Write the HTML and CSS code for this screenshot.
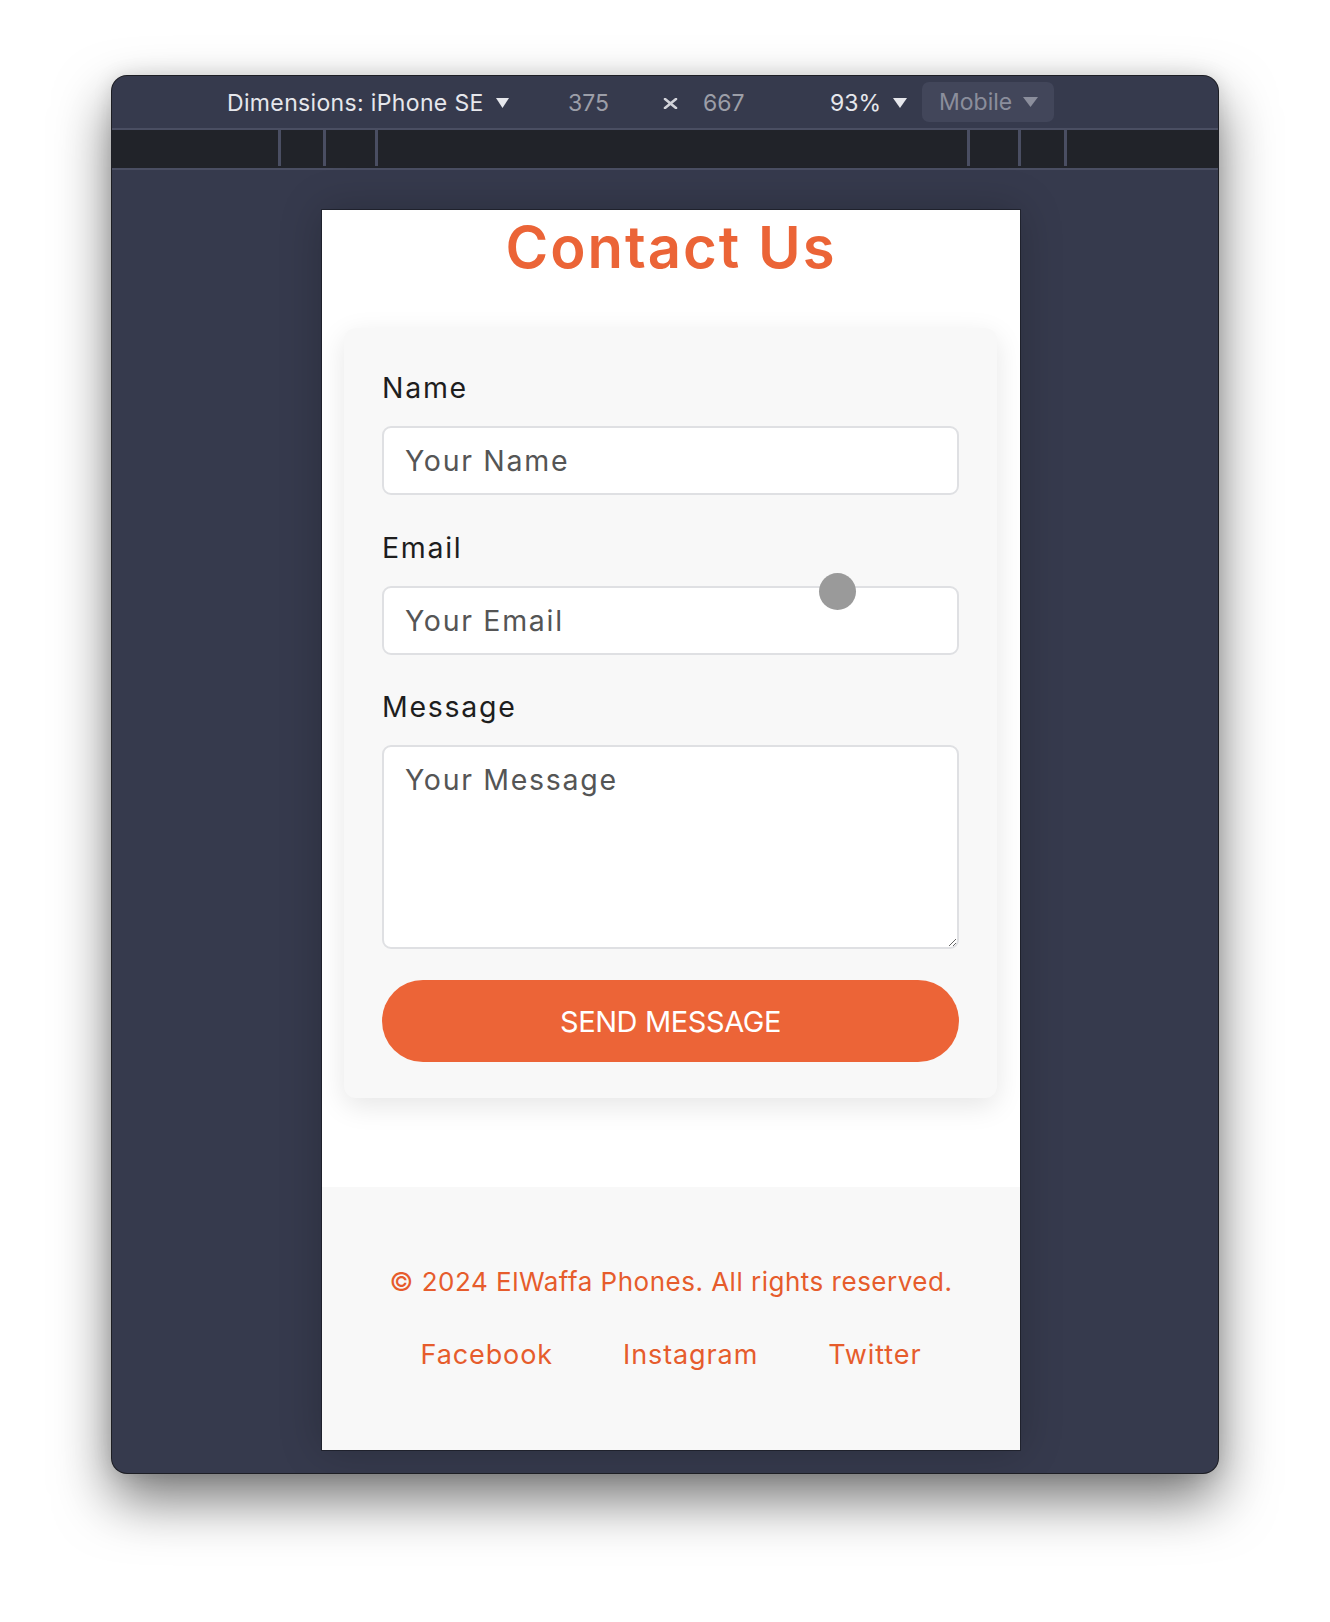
FILE: index.html
```html
<!DOCTYPE html>
<html lang="en">
<head>
<meta charset="utf-8">
<title>Contact Us - Device Preview</title>
<link rel="stylesheet" href="styles.css">
</head>
<body>
<div class="window">
  <div class="toolbar">
    <div class="tb-item tb-device"><span>Dimensions: iPhone SE</span><svg class="tri" width="13" height="10" viewBox="0 0 13 10"><polygon points="0,0 13,0 6.5,10" fill="currentColor"/></svg></div>
    <div class="tb-item tb-num">375</div>
    <div class="tb-item tb-x"><svg width="15" height="11" viewBox="0 0 15 11"><path d="M2 1 L13 10 M13 1 L2 10" stroke="currentColor" stroke-width="2.6" stroke-linecap="round"/></svg></div>
    <div class="tb-item tb-num">667</div>
    <div class="tb-item tb-zoom"><span>93%</span><svg class="tri" width="14" height="10" viewBox="0 0 14 10"><polygon points="0,0 14,0 7,10" fill="currentColor"/></svg></div>
    <div class="tb-item tb-mode"><span>Mobile</span><svg class="tri" width="15" height="10" viewBox="0 0 15 10"><polygon points="0,0 15,0 7.5,10" fill="currentColor"/></svg></div>
  </div>
  <div class="ruler">
    <div class="tick t1"></div>
    <div class="tick t2"></div>
    <div class="tick t3"></div>
    <div class="tick t4"></div>
    <div class="tick t5"></div>
    <div class="tick t6"></div>
  </div>
  <div class="stage">
    <div class="device">
      <h1 class="title">Contact Us</h1>
      <form class="card">
        <div class="field">
          <label class="label" for="name">Name</label>
          <input class="input" id="name" type="text" placeholder="Your Name">
        </div>
        <div class="field">
          <label class="label" for="email">Email</label>
          <input class="input" id="email" type="email" placeholder="Your Email">
        </div>
        <div class="field field-last">
          <label class="label" for="message">Message</label>
          <textarea class="textarea" id="message" placeholder="Your Message"></textarea>
        </div>
        <button class="send" type="button">Send Message</button>
      </form>
      <footer class="footer">
        <p class="copy">© 2024 ElWaffa Phones. All rights reserved.</p>
        <nav class="social">
          <a class="social-link" href="#">Facebook</a>
          <a class="social-link" href="#">Instagram</a>
          <a class="social-link" href="#">Twitter</a>
        </nav>
      </footer>
      <div class="touch-cursor"></div>
    </div>
  </div>
</div>
</body>
</html>
```
FILE: styles.css
```css
* { box-sizing: border-box; }
html, body { margin: 0; }
body {
  background: #ffffff;
  font-family: "Inter", "Noto Sans", sans-serif;
  padding: 76px 0 0 112px;
  height: 1622px;
  overflow: hidden;
}
.window {
  width: 1106px;
  height: 1397px;
  background: #363a4d;
  border-radius: 15px;
  box-shadow: 0 0 0 1px #1d1e24, 0 26px 55px rgba(0,0,0,0.55), 0 0 20px rgba(0,0,0,0.12);
  display: flex;
  flex-direction: column;
  overflow: hidden;
}
.toolbar {
  height: 52px;
  flex: none;
  display: grid;
  grid-template-columns: 341px 95px 40px 127px 92px 132px;
  align-items: center;
  padding-left: 115px;
  font-size: 23px;
  color: #e6e7ec;
}
.tb-item { display: flex; align-items: center; white-space: nowrap; padding-top: 2px; }
.tb-device span { letter-spacing: 0.35px; }
.tb-device .tri { margin-left: 12px; }
.tb-num { color: #9c9ea8; }
.tb-x { color: #d2d3d9; }
.tb-zoom .tri { margin-left: 12px; }
.tb-mode {
  height: 40px;
  padding: 0 0 0 17px;
  background: #42465a;
  border-radius: 7px;
  color: #8b8e9c;
  margin-top: -1px;
}
.tb-mode .tri { margin-left: 11px; }
.ruler {
  height: 42px;
  flex: none;
  background: #212329;
  border-top: 2px solid #4a4e62;
  border-bottom: 2px solid #4a4e62;
  display: flex;
}
.tick { width: 3px; height: 36px; background: #4a4e62; }
.t1 { margin-left: 166px; }
.t2 { margin-left: 42px; }
.t3 { margin-left: 49px; }
.t4 { margin-left: 589px; }
.t5 { margin-left: 48px; }
.t6 { margin-left: 43px; }
.stage {
  flex: 1;
  padding: 40px 0 0 210px;
}
.device {
  position: relative;
  width: 698px;
  height: 1240px;
  background: #ffffff;
  box-shadow: 0 0 0 1px rgba(0,0,0,0.35), 0 0 40px rgba(0,0,0,0.22);
  display: flex;
  flex-direction: column;
  overflow: hidden;
}
.title {
  margin: 0;
  padding-top: 2px;
  text-align: center;
  font-size: 58px;
  letter-spacing: 2px;
  line-height: 70px;
  font-weight: 600;
  color: #eb6437;
}
.card {
  margin: 46px 23px 0 22px;
  padding: 40px 38px 36px;
  background: #f8f8f8;
  border-radius: 12px;
  box-shadow: 0 8px 28px rgba(0,0,0,0.1);
}
.field { margin-bottom: 32.5px; }
.field-last { margin-bottom: 31px; }
.label {
  display: block;
  font-size: 28.5px;
  letter-spacing: 1.7px;
  line-height: 40px;
  color: #1e1e1e;
  margin-bottom: 18px;
}
.input, .textarea {
  display: block;
  width: 100%;
  border: 2px solid #dfe0e3;
  border-radius: 9px;
  background: #fff;
  font-family: inherit;
  font-size: 28.5px;
  letter-spacing: 1.7px;
  color: #333;
  padding: 0 21px;
  outline: none;
}
.input { height: 69px; }
.textarea { height: 204px; padding-top: 15px; resize: vertical; }
.input::placeholder, .textarea::placeholder { color: #555; opacity: 1; }
.send {
  display: block;
  width: 100%;
  height: 82px;
  border: none;
  border-radius: 41px;
  background: #ec6437;
  color: #fff;
  font-family: inherit;
  font-size: 29px;
  font-weight: 400;
  letter-spacing: -0.4px;
  text-transform: uppercase;
}
.footer {
  margin-top: 89px;
  flex: 1;
  background: #f8f8f8;
  padding: 75px 0 72px;
  text-align: center;
}
.copy {
  margin: 0;
  font-size: 26px;
  letter-spacing: 0.5px;
  line-height: 40px;
  color: #e65c2c;
}
.social {
  margin-top: 33px;
  display: flex;
  justify-content: center;
  gap: 70px;
}
.social-link {
  font-size: 27px;
  letter-spacing: 0.9px;
  line-height: 40px;
  color: #e65c2c;
  text-decoration: none;
}
.touch-cursor {
  position: absolute;
  left: 497px;
  top: 363px;
  width: 37px;
  height: 37px;
  border-radius: 50%;
  background: #9a9a9a;
}
```
